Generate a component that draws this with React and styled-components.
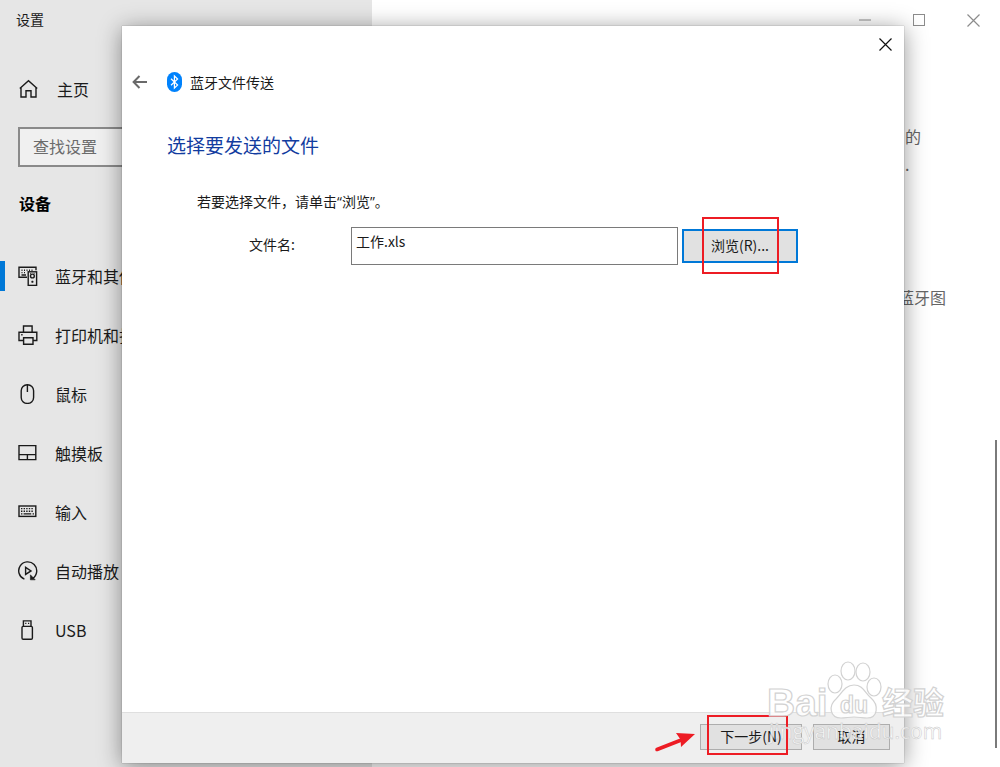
import React from 'react';
import styled, { createGlobalStyle } from 'styled-components';

const GlobalStyle = createGlobalStyle`
  * { box-sizing: border-box; }
  body {
    margin: 0;
    background: #fff;
    color: #1a1a1a;
    font-family: "Noto Sans CJK SC", sans-serif;
    font-size: 14px;
    line-height: 20px;
    overflow: hidden;
  }
  button, input { font: inherit; color: inherit; }
`;

const Screen = styled.div`
  position: relative;
  display: flex;
  min-height: 100vh;
`;

/* Settings window */
const Sidebar = styled.aside`
  flex: 0 0 372px;
  background: #e6e6e6;
  font-size: 16px;
  line-height: 24px;
`;

const AppTitle = styled.div`
  height: 59px;
  padding: 7px 16px;
  font-size: 14px;
`;

const NavLink = styled.a`
  position: relative;
  display: flex;
  align-items: center;
  gap: ${(p) => (p.$home ? 19 : 17)}px;
  height: 59px;
  padding-left: 18px;
  color: inherit;
  text-decoration: none;

  &::before {
    content: "";
    position: absolute;
    left: 0;
    width: 5px;
    height: 30px;
    background: ${(p) => (p.$active ? '#0078d7' : 'transparent')};
  }
`;

const SearchBox = styled.input`
  display: block;
  width: 334px;
  height: 40px;
  margin: 9px 0 0 18px;
  padding: 0 13px 2px;
  border: 2px solid #8a8a8a;
  border-radius: 0;
  background: #f0f0f0;
  &::placeholder { color: #6b6b6b; opacity: 1; }
`;

const SectionTitle = styled.h2`
  margin: 24px 0 31px 19px;
  font-size: 16px;
  line-height: 24px;
  font-weight: 700;
  color: #000;
`;

const Nav = styled.nav`
  display: flex;
  flex-direction: column;
`;

const Icon = styled.svg`
  flex: none;
  width: 20px;
  height: 20px;
  fill: none;
  stroke: currentColor;
  stroke-width: 1.4;
`;

const Main = styled.main`
  flex: 1;
  display: flex;
  flex-direction: column;
  align-items: flex-end;
`;

const WindowControls = styled.div`
  display: flex;
`;

const ControlButton = styled.button`
  display: grid;
  place-items: center;
  width: 54px;
  height: 40px;
  padding: 0;
  border: 0;
  background: none;
  color: #8c8c8c;
`;

const MainBody = styled.div`
  flex: 1;
  display: flex;
  justify-content: space-between;
  width: 102px;
`;

const Related = styled.div`
  padding-top: 82px;
  color: #666;
  font-size: 16px;
  line-height: 28px;
  white-space: nowrap;
`;

const RelatedText = styled.p`
  margin: 0 0 105px;
  padding-left: ${(p) => (p.$indent ? 7 : 0)}px;
`;

const ScrollThumb = styled.div`
  width: 2px;
  margin: 400px 3px 19px 0;
  background: #7a7a7a;
`;

/* Transfer wizard */
const Dialog = styled.section`
  position: absolute;
  top: 26px;
  right: 96px;
  bottom: 4px;
  left: 122px;
  display: flex;
  flex-direction: column;
  background: #fff;
  box-shadow: 0 0 1px rgba(0, 0, 0, 0.4), 0 3px 22px rgba(0, 0, 0, 0.42);
`;

const DialogBar = styled.div`
  display: flex;
  justify-content: flex-end;
`;

const CloseButton = styled.button`
  display: grid;
  place-items: center;
  width: 37px;
  height: 36px;
  padding: 0;
  border: 0;
  background: none;
  color: #111;
`;

const DialogHeader = styled.header`
  display: flex;
  align-items: center;
  height: 40px;
  padding-left: 10px;
`;

const BackButton = styled.button`
  display: flex;
  width: 35px;
  padding: 0;
  border: 0;
  background: none;
  color: #6a6a6a;
`;

const DialogTitle = styled.span`
  margin-left: 8px;
`;

const DialogBody = styled.div`
  flex: 1;
  padding: 29px 106px 0 45px;
`;

const Heading = styled.h1`
  margin: 0;
  font-size: 19px;
  line-height: 28px;
  font-weight: 400;
  color: #123c9f;
`;

const Hint = styled.p`
  margin: 33px 0 15px 30px;
  font-family: "Open Sans", "Noto Sans CJK SC", sans-serif;
`;

const FileRow = styled.div`
  display: flex;
  align-items: center;
  gap: 4px;
  padding-left: 82px;
`;

const FileLabel = styled.label`
  width: 98px;
  padding-bottom: 4px;
`;

const FileInput = styled.input`
  flex: 1;
  min-width: 0;
  height: 38px;
  padding: 0 4px 10px;
  border: 1px solid #7a7a7a;
  border-radius: 0;
  background: #fff;
`;

const Marked = styled.div`
  position: relative;
  display: flex;
`;

const PushButton = styled.button`
  width: ${(p) => p.$width}px;
  height: ${(p) => (p.$focused ? 34 : 26)}px;
  padding: 0 0 2px;
  border: ${(p) => (p.$focused ? '2px solid #0078d7' : '1px solid #adadad')};
  border-radius: 0;
  background: #e1e1e1;
  line-height: 20px;
`;

const RedFrame = styled.span`
  position: absolute;
  inset: ${(p) => p.$inset};
  border: 2px solid #ed1c24;
  pointer-events: none;
`;

const Arrow = styled.svg`
  position: absolute;
  right: 106px;
  top: 5px;
  width: 42px;
  height: 24px;
`;

const Footer = styled.footer`
  display: flex;
  justify-content: flex-end;
  align-items: center;
  gap: 11px;
  height: 51px;
  padding: 0 14px 2px 0;
  border-top: 1px solid #dfdfdf;
  background: #efefef;
`;

const Watermark = styled.svg`
  position: absolute;
  right: 50px;
  bottom: 17px;
  width: 186px;
  height: 96px;
  pointer-events: none;
  font-family: "Liberation Sans", "Noto Sans CJK SC", sans-serif;
`;

const Cross = () => (
  <svg width="13" height="13" viewBox="0 0 13 13" fill="none" stroke="currentColor" strokeWidth="1.2">
    <path d="M.5.5l12 12M12.5.5l-12 12" />
  </svg>
);

const icons = {
  home: <path d="M3 8.6V18h5v-6.2h5V18h5V8.6M1.8 9.5l8.700-7.800 8.700 7.800" />,
  devices: (
    <>
      <path d="M9 11.2H1V1.2h17v3" />
      <path d="M3.500 4.200h1M6 4.200h1M8.500 4.200h1M11 4.200h1M13.500 4.200h1M3.500 6.600h1M6 6.600h1M3.500 9h4.500" />
      <rect x="10.2" y="5.8" width="8.4" height="13.6" />
      <circle cx="14.4" cy="10" r="1.9" />
      <path d="M13.4 15.8h2M14.4 14.8v2M12.3 7.6h.8M15.7 7.6h.8" />
    </>
  ),
  printer: (
    <path d="M5.500 7V1h8.600v6M5 15.500H1V7.200h17.800v8.300H15M5.600 12.700H15v6.600H5.600zM3.200 9.800h1.400" />
  ),
  mouse: (
    <>
      <rect x="3.2" y=".8" width="12.4" height="18.6" rx="6" />
      <path d="M9.4 1v7" />
    </>
  ),
  touchpad: <path d="M1 2.600h16.800v14H1zM1 11.600h16.800M9.400 11.600v4.800" />,
  keyboard: (
    <>
      <rect x="1" y="4" width="16.8" height="10.4" />
      <path d="M3 6.6h13M3 9.2h13" strokeDasharray="1.4 1.2" />
      <path d="M3 11.9h1.4M5.6 11.9h7.6M14.6 11.9H16" />
    </>
  ),
  autoplay: (
    <>
      <path d="M6.4 18.200A9 9 0 1 1 14.600 17.400" />
      <path d="M12.400 13.800v5H17.200z" fill="currentColor" strokeWidth="0.6" />
      <path d="M7.600 6.400v7l5.400-3.500z" />
    </>
  ),
  usb: (
    <>
      <rect x="4" y="6.4" width="10.4" height="12.8" rx="1.2" />
      <path d="M5.4 6.2V.9H13v5.3M7.2 3.4h1.2M10 3.4h1.2" />
    </>
  ),
};

const Glyph = ({ name }) => (
  <Icon viewBox="0 0 20 20" aria-hidden="true">{icons[name]}</Icon>
);

const navItems = [
  ['devices', '蓝牙和其他设备'],
  ['printer', '打印机和扫描仪'],
  ['mouse', '鼠标'],
  ['touchpad', '触摸板'],
  ['keyboard', '输入'],
  ['autoplay', '自动播放'],
  ['usb', 'USB'],
];

const pawShapes = (
  <>
    <ellipse cx="71" cy="30" rx="7" ry="9" />
    <ellipse cx="84" cy="17" rx="7" ry="9" />
    <ellipse cx="99" cy="18" rx="7" ry="9" />
    <ellipse cx="110" cy="33" rx="7" ry="9" />
    <path d="M90 31c9 0 11 8 17 13 8 7 7 20-4 20-5 0-8-1-13-1s-8 1-13 1c-11 0-13-12-5-19 6-6 9-14 18-14z" />
  </>
);

export default function App() {
  return (
    <>
      <GlobalStyle />
      <Screen>
        <Sidebar>
          <AppTitle>设置</AppTitle>
          <NavLink href="#home" $home>
            <Glyph name="home" />
            主页
          </NavLink>
          <SearchBox type="search" aria-label="查找设置" placeholder="查找设置" />
          <SectionTitle>设备</SectionTitle>
          <Nav>
            {navItems.map(([name, label], i) => (
              <NavLink key={name} href={`#${name}`} $active={i === 0}>
                <Glyph name={name} />
                {label}
              </NavLink>
            ))}
          </Nav>
        </Sidebar>

        <Main>
          <WindowControls>
            <ControlButton aria-label="最小化">
              <svg width="12" height="2"><path d="M0 1h12" stroke="currentColor" /></svg>
            </ControlButton>
            <ControlButton aria-label="最大化">
              <svg width="12" height="12"><rect x=".5" y=".5" width="11" height="11" fill="none" stroke="currentColor" /></svg>
            </ControlButton>
            <ControlButton aria-label="关闭"><Cross /></ControlButton>
          </WindowControls>
          <MainBody>
            <Related>
              <RelatedText $indent>的<br />.</RelatedText>
              <RelatedText>蓝牙图</RelatedText>
            </Related>
            <ScrollThumb />
          </MainBody>
        </Main>

        <Dialog role="dialog" aria-labelledby="wizard-title">
          <DialogBar>
            <CloseButton aria-label="关闭"><Cross /></CloseButton>
          </DialogBar>
          <DialogHeader>
            <BackButton aria-label="返回">
              <svg width="16" height="14" viewBox="0 0 16 14" fill="none" stroke="currentColor" strokeWidth="2">
                <path d="M15 7H2M7.5 1L1.6 7l5.9 6" />
              </svg>
            </BackButton>
            <svg width="15" height="20" viewBox="0 0 15 20" aria-hidden="true">
              <rect width="15" height="20" rx="7.5" fill="#0082fc" />
              <path d="M4 6.8l6.6 6.2-3.2 3V4l3.2 3L4 13.2" fill="none" stroke="#fff" strokeWidth="1.2" />
            </svg>
            <DialogTitle id="wizard-title">蓝牙文件传送</DialogTitle>
          </DialogHeader>
          <DialogBody>
            <Heading>选择要发送的文件</Heading>
            <Hint>若要选择文件，请单击“浏览”。</Hint>
            <FileRow>
              <FileLabel htmlFor="file-name">文件名:</FileLabel>
              <FileInput id="file-name" type="text" defaultValue="工作.xls" />
              <Marked>
                <PushButton $width={116} $focused>浏览(R)...</PushButton>
                <RedFrame $inset="-12px 19px -11px 20px" />
              </Marked>
            </FileRow>
          </DialogBody>
          <Footer>
            <Marked>
              <PushButton $width={102}>下一步(N)</PushButton>
              <RedFrame $inset="-9px 14px -5px 7px" />
              <Arrow viewBox="0 0 42 24" aria-hidden="true">
                <path d="M3 20.500L26 11.500" stroke="#ed1c24" strokeWidth="3.6" strokeLinecap="round" />
                <path d="M41 5L22 4l4.500 6.500L27 18z" fill="#ed1c24" />
              </Arrow>
            </Marked>
            <PushButton $width={77}>取消</PushButton>
          </Footer>
        </Dialog>

        <Watermark viewBox="0 0 186 96" aria-hidden="true">
          <g fill="#fff" fillOpacity="0.85" stroke="#d2d2d2" strokeWidth="1.2">
            {pawShapes}
            <g fontWeight="700">
              <text x="3" y="62" fontSize="39">Bai</text>
              <text x="76" y="59" fontSize="23">du</text>
              <text x="118" y="60" fontSize="31">经验</text>
            </g>
          </g>
          <text x="5" y="85" fontSize="21" fontFamily="Open Sans" fill="#fff" fillOpacity="0.8" stroke="#c8c8c8" strokeWidth="0.5">
            jingyanbaidu.com
          </text>
        </Watermark>
      </Screen>
    </>
  );
}
